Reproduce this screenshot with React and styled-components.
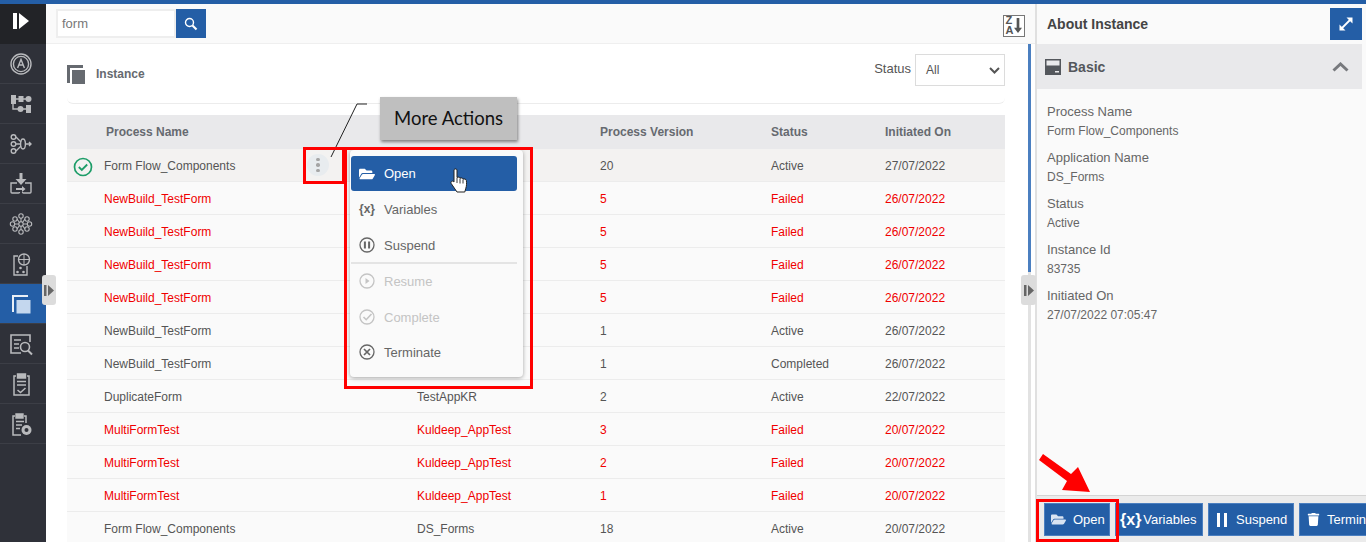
import React from 'react';
import styled, { createGlobalStyle } from 'styled-components';
import { FaFolderOpen, FaTrash } from 'react-icons/fa';

const GlobalStyle = createGlobalStyle`
  html, body { margin: 0; padding: 0; height: 100%; overflow: hidden; background: #fff; }
  * { box-sizing: border-box; }
  body { font-family: "Liberation Sans", Arial, sans-serif; }
`;

// app names of the first rows sit under the open menu, so they stay empty
const rows = [
  { name: 'Form Flow_Components', ver: 20, status: 'Active', date: '27/07/2022', selected: true },
  { name: 'NewBuild_TestForm', ver: 5, status: 'Failed', date: '26/07/2022' },
  { name: 'NewBuild_TestForm', ver: 5, status: 'Failed', date: '26/07/2022' },
  { name: 'NewBuild_TestForm', ver: 5, status: 'Failed', date: '26/07/2022' },
  { name: 'NewBuild_TestForm', ver: 5, status: 'Failed', date: '26/07/2022' },
  { name: 'NewBuild_TestForm', ver: 1, status: 'Active', date: '26/07/2022' },
  { name: 'NewBuild_TestForm', ver: 1, status: 'Completed', date: '26/07/2022' },
  { name: 'DuplicateForm', app: 'TestAppKR', ver: 2, status: 'Active', date: '22/07/2022' },
  { name: 'MultiFormTest', app: 'Kuldeep_AppTest', ver: 3, status: 'Failed', date: '20/07/2022' },
  { name: 'MultiFormTest', app: 'Kuldeep_AppTest', ver: 2, status: 'Failed', date: '20/07/2022' },
  { name: 'MultiFormTest', app: 'Kuldeep_AppTest', ver: 1, status: 'Failed', date: '20/07/2022' },
  { name: 'Form Flow_Components', app: 'DS_Forms', ver: 18, status: 'Active', date: '20/07/2022' },
];

const fields = [
  ['Process Name', 'Form Flow_Components'],
  ['Application Name', 'DS_Forms'],
  ['Status', 'Active'],
  ['Instance Id', '83735'],
  ['Initiated On', '27/07/2022 07:05:47'],
];

const Ico = ({ children }) => (
  <svg viewBox="0 0 24 24" fill="none" stroke="currentColor" strokeWidth="1.4">
    {children}
  </svg>
);

const navIcons = [
  <Ico key="a"><circle cx="12" cy="12" r="10" /><circle cx="12" cy="12" r="7.6" /><path d="M8.6 16 12 7.500 15.400 16M9.800 13h4.400" /></Ico>,
  <Ico key="b">
    <g fill="currentColor" stroke="none">
      <rect x="2" y="3" width="5" height="9" /><rect x="9.500" y="4" width="5" height="6" /><circle cx="19.500" cy="7" r="3" />
      <circle cx="11.500" cy="17" r="3" /><rect x="17" y="13" width="5" height="8" />
    </g>
    <path d="M7 7h10M4 12v5h5M14 17h3" />
  </Ico>,
  <Ico key="c"><circle cx="4.500" cy="5" r="2.300" /><circle cx="4.500" cy="12" r="2.300" /><circle cx="4.500" cy="19" r="2.300" /><path d="M7 5l5 5M7 12h5M7 19l5-5" /><ellipse cx="14" cy="12" rx="2.400" ry="5" /><path d="M17 12h5M20 10l2 2-2 2" /></Ico>,
  <Ico key="d">
    <path d="M12 1v8" strokeWidth="3" /><path d="M6.500 7h11L12 13z" fill="currentColor" stroke="none" />
    <path d="M8 11H2v9q0 1 1 1h6.500q1 0 1-1M16 11h6v9q0 1-1 1h-6.500q-1 0-1-1" />
    <path d="M7 17h8" strokeWidth="2" /><path d="M13 14l3.500 3-3.500 3z" fill="currentColor" stroke="none" />
  </Ico>,
  <Ico key="e">
    <g strokeWidth="1.100">
      <circle cx="12" cy="4" r="2.200" /><circle cx="6" cy="7" r="2.200" /><circle cx="18" cy="7" r="2.200" />
      <circle cx="3.500" cy="12" r="2.200" /><circle cx="12" cy="12" r="2.200" /><circle cx="20.500" cy="12" r="2.200" />
      <circle cx="6" cy="17" r="2.200" /><circle cx="18" cy="17" r="2.200" /><circle cx="12" cy="20" r="2.200" />
      <path d="M12 6v4M12 14v4M8 7l2.500 3.500M16 7l-2.500 3.500M8 17l2.500-3.500M16 17l-2.500-3.500M5.700 12h4.100M14.200 12h4.100" />
    </g>
  </Ico>,
  <Ico key="f">
    <path d="M9 4H5v19h13v-9" /><circle cx="15" cy="7.500" r="5.500" /><path d="M15 2v11M10 7.500h10" strokeWidth="1" />
    <g fill="currentColor" stroke="none"><circle cx="11.500" cy="16" r="1.300" /><circle cx="8.500" cy="20" r="1.300" /><circle cx="14.500" cy="20" r="1.300" /></g>
  </Ico>,
  <Ico key="g">
    <path d="M4 20V4h15" stroke="#fff" strokeWidth="2" opacity=".9" />
    <rect x="7.500" y="8" width="14" height="13.500" fill="#c4d7ee" stroke="none" />
  </Ico>,
  <Ico key="h">
    <path d="M21 10V3H2v18h10" strokeWidth="1.600" /><path d="M5 8h7M5 12h5M5 16h5" strokeWidth="1.600" />
    <circle cx="16" cy="15" r="4.500" strokeWidth="1.600" /><path d="M19 18.500l4 4" strokeWidth="2" />
  </Ico>,
  <Ico key="i">
    <path d="M7 4H5v19h15V4h-2" strokeWidth="1.500" /><path d="M8.500 2h8v4h-8z" fill="currentColor" />
    <path d="M8 9.500h9M8 13h9" strokeWidth="1.300" /><path d="M8.500 18l3 2.500 5-4.500" strokeWidth="1.500" />
  </Ico>,
  <Ico key="j">
    <path d="M6 4H4v19h8M15 4h2v7" strokeWidth="1.500" /><path d="M7 2h7v4H7z" fill="currentColor" />
    <path d="M7 9.500h8M7 13h6M7 16.500h4" strokeWidth="1.300" />
    <circle cx="17.500" cy="18" r="5" fill="currentColor" stroke="none" /><circle cx="17.500" cy="18" r="2" fill="#2f3139" stroke="none" />
  </Ico>,
];

const MenuIcon = ({ kind }) => {
  if (kind === 'open') return <FaFolderOpen size={16} />;
  if (kind === 'vars') return <Curly size="12px">{'{x}'}</Curly>;
  return (
    <svg width="16" height="16" viewBox="0 0 16 16" fill="none" stroke="currentColor" strokeWidth="1.300">
      <circle cx="8" cy="8" r="7" />
      {kind === 'pause' && <path d="M5.900 4.500v7M10.100 4.500v7" strokeWidth="2" />}
      {kind === 'play' && <path d="M6.500 5l4 3-4 3z" fill="currentColor" stroke="none" />}
      {kind === 'check' && <path d="M4.500 8l2.700 2.700L12.500 5" strokeWidth="1.600" />}
      {kind === 'close' && <path d="M5 5l6 6M11 5l-6 6" strokeWidth="1.700" />}
    </svg>
  );
};

const App = () => (
  <Page>
    <GlobalStyle />
    <TopBar />
    <Body>
      <Sidebar>
        <NavLogo>
          <svg width="16" height="16" viewBox="0 0 16 16"><path d="M0 0h4v16H0zM6 0l10 8-10 8z" fill="#fff" /></svg>
        </NavLogo>
        {navIcons.map((icon, i) => (
          <NavItem key={i} active={i === 6}>{icon}</NavItem>
        ))}
      </Sidebar>

      <Main>
        <Toolbar>
          <SearchBox>
            <SearchInput>form</SearchInput>
            <SearchButton>
              <svg width="14" height="14" viewBox="0 0 14 14" fill="none" stroke="#fff"><circle cx="5.500" cy="5.500" r="4" strokeWidth="1.400" /><path d="M8.500 8.500l4 4" strokeWidth="2.200" /></svg>
            </SearchButton>
          </SearchBox>
          <SortButton>
            <SortLetters><span>Z</span><span>A</span></SortLetters>
            <svg width="8" height="17" viewBox="0 0 9 17"><path d="M3 0h3v11h3l-4.500 6L0 11h3z" fill="#555" /></svg>
          </SortButton>
        </Toolbar>
        <Workspace>
          <Content>
            <TitleRow>
              <TitleGroup>
                <svg width="18" height="19" viewBox="0 0 18 19">
                  <path d="M0 0h16v3H3v15H0z" fill="#666a70" />
                  <rect x="5" y="5" width="13" height="14" fill="#666a70" />
                </svg>
                <Title>Instance</Title>
              </TitleGroup>
              <StatusFilter>
                <StatusLabel>Status</StatusLabel>
                <Select>All<svg width="11" height="7" viewBox="0 0 11 7" fill="none" stroke="#555" strokeWidth="2"><path d="M1 1l4.500 4.500L10 1" /></svg></Select>
              </StatusFilter>
            </TitleRow>
            <Table>
              <HeadRow>
                <HeadCell first>Process Name</HeadCell>
                <HeadCell />
                <HeadCell>Process Version</HeadCell>
                <HeadCell>Status</HeadCell>
                <HeadCell>Initiated On</HeadCell>
              </HeadRow>
              {rows.map((r, i) => (
                <Row key={i} selected={r.selected} failed={r.status === 'Failed'}>
                  <NameCell>
                    {r.selected && (
                      <CheckMark>
                        <svg width="20" height="20" viewBox="0 0 20 20" fill="none" stroke="#1d9d68"><circle cx="10" cy="10" r="8.500" strokeWidth="1.700" /><path d="M5.800 10l3 3 5.400-5.500" strokeWidth="1.800" /></svg>
                      </CheckMark>
                    )}
                    {r.name}
                  </NameCell>
                  <span>{r.app}</span>
                  <span>{r.ver}</span>
                  <span>{r.status}</span>
                  <span>{r.date}</span>
                </Row>
              ))}
            </Table>
          </Content>
          <ScrollTrack><ScrollThumb /></ScrollTrack>
        </Workspace>
      </Main>

      <Panel>
        <PanelHeader>
          <PanelTitle>About Instance</PanelTitle>
          <ExpandButton>
            <svg width="16" height="16" viewBox="0 0 16 16" fill="none" stroke="#fff" strokeWidth="1.800"><path d="M3 13 13 3" /><path d="M8.500 1.500h6v6L8.500 1.500zM7.500 14.500h-6v-6l6 6z" fill="#fff" stroke="none" /></svg>
          </ExpandButton>
        </PanelHeader>
        <SectionHead>
          <SectionTitle>
            <svg width="16" height="16" viewBox="0 0 16 16"><path d="M0 0h16v16H0z" fill="#54575c" /><path d="M1.500 1.500h13v5h-13z" fill="#e9e9eb" /><path d="M10 12h4v1.500h-4z" fill="#e9e9eb" /></svg>
            Basic
          </SectionTitle>
          <svg width="17" height="10" viewBox="0 0 17 10" fill="none" stroke="#77797d" strokeWidth="3"><path d="M1.500 8.500l7-6.500 7 6.500" /></svg>
        </SectionHead>
        <Fields>
          {fields.map(([label, value]) => (
            <Field key={label}>
              <FieldLabel>{label}</FieldLabel>
              <FieldValue>{value}</FieldValue>
            </Field>
          ))}
        </Fields>
        <ActionBar>
          <ActionButton width="66px" pad="6px" gap="7px"><FaFolderOpen size={15} color="#d9e4f2" />Open</ActionButton>
          <ActionButton width="88px" pad="4px" gap="2px"><Curly size="16px">{'{x}'}</Curly>Variables</ActionButton>
          <ActionButton width="86px" pad="8px" gap="9px">
            <svg width="10" height="14" viewBox="0 0 10 14"><path d="M0 0h3v14H0zM7 0h3v14H7z" fill="#fff" /></svg>
            Suspend
          </ActionButton>
          <ActionButton width="90px" pad="7px" gap="7px"><FaTrash size={13} />Terminate</ActionButton>
        </ActionBar>
      </Panel>

      <Handle left="42px" width="14px" />
      <Handle left="1021px" width="15px" />

      {/* annotations laid over the screenshot */}
      <Callout>More Actions</Callout>
      <Leader width="60" height="60" viewBox="0 0 60 60" fill="none" stroke="#222"><path d="M3 54 29 1h10" /></Leader>
      <KebabWrap>
        <Kebab><i /><i /><i /></Kebab>
      </KebabWrap>
      <RedBox x="303px" y="143px" w="42px" h="37px" />
      <Menu>
        <MenuItem active><MenuIcon kind="open" />Open</MenuItem>
        <MenuItem><MenuIcon kind="vars" />Variables</MenuItem>
        <MenuItem><MenuIcon kind="pause" />Suspend</MenuItem>
        <MenuDivider />
        <MenuItem disabled><MenuIcon kind="play" />Resume</MenuItem>
        <MenuItem disabled><MenuIcon kind="check" />Complete</MenuItem>
        <MenuItem><MenuIcon kind="close" />Terminate</MenuItem>
      </Menu>
      <RedBox x="344px" y="143px" w="189px" h="242px" />
      <HandCursor width="18" height="25" viewBox="0 0 18 25">
        <path d="M4 1.800C4.600.6 6.800.6 7 2v7.500c1.300-.8 2.900-.4 3 .7 1.200-.7 2.800-.2 3 .9 1.300-.5 3.200.1 3.400 1.500.3 2.800.2 5.500-.6 7.700L14.800 24H7L1.200 15.500c-.9-1.600 1-3.200 2.300-1.900L4 14z" fill="#fff" stroke="#222" strokeWidth="1" />
        <path d="M7 10v5M10 10.500v5M13 11.500v4" stroke="#222" strokeWidth=".9" />
      </HandCursor>
      <Arrow width="52" height="39" viewBox="0 0 52 39"><path d="M4 0 32 20 39 13 51 38 23 36 28 27 0 6z" fill="#f00" /></Arrow>
      <RedBox x="1036px" y="495px" w="83px" h="43px" />
    </Body>
  </Page>
);

const Page = styled.div`
  width: 1366px;
  height: 542px;
  overflow: hidden;
  display: flex;
  flex-direction: column;
`;

const TopBar = styled.div`
  height: 4px;
  background: #245ea6;
  flex: none;
`;

const Body = styled.div`
  position: relative;
  flex: 1;
  min-height: 0;
  display: flex;
`;

const Sidebar = styled.nav`
  width: 46px;
  flex: none;
  background: #2f3139;
  display: flex;
  flex-direction: column;
`;

const NavLogo = styled.div`
  height: 40px;
  flex: none;
  background: #222327;
  display: flex;
  align-items: center;
  justify-content: center;
  padding-right: 5px;
  padding-bottom: 6px;
`;

const NavItem = styled.div.withConfig({ shouldForwardProp: p => p !== 'active' })`
  height: 40px;
  flex: none;
  display: flex;
  align-items: center;
  justify-content: center;
  color: #b9babd;
  border-bottom: 1px solid #3c3e46;
  background: ${p => (p.active ? '#245ea6' : 'transparent')};
  padding-right: 4px;
  svg { width: 24px; height: 24px; }
`;

const Main = styled.main`
  flex: none;
  width: 989px;
  display: flex;
  flex-direction: column;
  background: #fff;
`;

const Toolbar = styled.div`
  height: 40px;
  flex: none;
  display: flex;
  align-items: center;
  justify-content: space-between;
  background: #fafafa;
  border-bottom: 1px solid #efefef;
  padding: 0 10px 0 10px;
`;

const SearchBox = styled.div`
  display: flex;
  height: 29px;
`;

const SearchInput = styled.div`
  width: 120px;
  border: 2px solid #eeeeee;
  background: #fff;
  font-size: 13px;
  color: #777;
  padding: 0 4px;
  line-height: 25px;
`;

const SearchButton = styled.div`
  width: 30px;
  background: #245ea6;
  display: flex;
  align-items: center;
  justify-content: center;
`;

const SortButton = styled.div`
  width: 22px;
  height: 22px;
  margin-top: 4px;
  border: 1px solid #777;
  display: flex;
  align-items: center;
  justify-content: center;
  gap: 1px;
  background: #fff;
`;

const SortLetters = styled.div`
  display: flex;
  flex-direction: column;
  font-size: 11px;
  font-weight: 700;
  line-height: 9.500px;
  color: #555;
`;

const Workspace = styled.div`
  flex: 1;
  min-height: 0;
  display: flex;
`;

const Content = styled.div`
  flex: 1;
  min-width: 0;
  padding: 0 23px 0 21px;
  display: flex;
  flex-direction: column;
`;

const ScrollTrack = styled.div`
  width: 3px;
  flex: none;
  margin-right: 4px;
  background: #e2e2e2;
`;

const ScrollThumb = styled.div`
  height: 228px;
  background: #4b7fc0;
`;

const TitleRow = styled.div`
  height: 60px;
  flex: none;
  display: flex;
  align-items: flex-start;
  justify-content: space-between;
  border-bottom: 1px solid #ececec;
  border-radius: 0 0 6px 6px;
`;

const TitleGroup = styled.div`
  display: flex;
  align-items: center;
  gap: 11px;
  padding-top: 21px;
`;

const Title = styled.span`
  font-size: 12px;
  font-weight: 700;
  color: #666a70;
  margin-bottom: 2px;
`;

const StatusFilter = styled.div`
  display: flex;
  align-items: center;
  gap: 4px;
  padding-top: 10px;
  font-size: 13px;
  color: #555;
`;

const StatusLabel = styled.span`
  margin-bottom: 3px;
`;

const Select = styled.div`
  width: 90px;
  height: 32px;
  border: 1px solid #dcdcdc;
  padding: 0 4px 0 10px;
  display: flex;
  align-items: center;
  justify-content: space-between;
  font-size: 12px;
  color: #555;
`;

const Table = styled.div`
  margin-top: 11px;
  display: flex;
  flex-direction: column;
`;

const gridColumns = '350px 183px 171px 114px 1fr';

const HeadRow = styled.div`
  height: 34px;
  flex: none;
  display: grid;
  grid-template-columns: ${gridColumns};
  align-items: center;
  background: #e9e9eb;
`;

const HeadCell = styled.span.withConfig({ shouldForwardProp: p => p !== 'first' })`
  font-size: 12px;
  font-weight: 700;
  color: #666a70;
  padding-left: ${p => (p.first ? '39px' : '0')};
`;

const Row = styled.div.withConfig({ shouldForwardProp: p => p !== 'selected' && p !== 'failed' })`
  height: 33px;
  flex: none;
  display: grid;
  grid-template-columns: ${gridColumns};
  align-items: center;
  padding-top: 1px;
  font-size: 12px;
  color: ${p => (p.failed ? '#f00000' : '#555')};
  background: ${p => (p.selected ? '#f3f2f1' : '#fafafa')};
  border-bottom: 1px solid #ececec;
`;

const NameCell = styled.span`
  position: relative;
  padding-left: 37px;
`;

const CheckMark = styled.span`
  position: absolute;
  left: 6px;
  top: -2px;
`;

const Panel = styled.aside`
  position: relative;
  flex: 1;
  min-width: 0;
  display: flex;
  flex-direction: column;
  background: #fafafa;
  border-left: 2px solid #e0e0e0;
`;

const PanelHeader = styled.div`
  height: 40px;
  flex: none;
  display: flex;
  align-items: center;
  justify-content: space-between;
  padding: 0 4px 0 10px;
`;

const PanelTitle = styled.span`
  font-size: 14px;
  font-weight: 700;
  color: #444;
`;

const ExpandButton = styled.div`
  width: 32px;
  height: 32px;
  background: #245ea6;
  display: flex;
  align-items: center;
  justify-content: center;
`;

const SectionHead = styled.div`
  height: 45px;
  flex: none;
  margin-right: 4px;
  background: #e9e9eb;
  display: flex;
  align-items: center;
  justify-content: space-between;
  padding: 0 13px 0 8px;
`;

const SectionTitle = styled.div`
  display: flex;
  align-items: center;
  gap: 7px;
  font-size: 14px;
  font-weight: 700;
  color: #54575c;
`;

const Fields = styled.div`
  flex: 1;
  min-height: 0;
  padding: 15px 10px 0;
  display: flex;
  flex-direction: column;
  gap: 12px;
`;

const Field = styled.div`
  height: 34px;
  display: flex;
  flex-direction: column;
  gap: 4px;
`;

const FieldLabel = styled.span`
  font-size: 13px;
  line-height: 16px;
  color: #666;
`;

const FieldValue = styled.span`
  font-size: 12px;
  line-height: 14px;
  color: #666;
`;

const ActionBar = styled.div`
  height: 47px;
  flex: none;
  border-top: 1px solid #d4d4d4;
  background: #ebebeb;
  display: flex;
  align-items: flex-start;
  gap: 5px;
  padding: 7px 0 0 7px;
  overflow: hidden;
`;

const ActionButton = styled.div.withConfig({ shouldForwardProp: p => !['pad', 'gap', 'width'].includes(p) })`
  width: ${p => p.width};
  height: 33px;
  flex: none;
  background: #245ea6;
  border: 1px solid #4b7fc0;
  color: #fff;
  font-size: 13px;
  display: flex;
  align-items: center;
  padding-left: ${p => p.pad};
  gap: ${p => p.gap};
  white-space: nowrap;
`;

const Curly = styled.span.withConfig({ shouldForwardProp: p => p !== 'size' })`
  font-weight: 700;
  font-size: ${p => p.size};
`;

const Handle = styled.div.attrs({ children: <svg width="10" height="11" viewBox="0 0 10 11"><path d="M0 0h2.500v11H0zM4 0l6 5.500L4 11z" fill="#666" /></svg> })`
  position: absolute;
  top: 271px;
  left: ${p => p.left};
  width: ${p => p.width};
  height: 30px;
  background: #dcdcdc;
  border-radius: 3px;
  display: flex;
  align-items: center;
  justify-content: center;
`;

const Callout = styled.div`
  position: absolute;
  left: 380px;
  top: 93px;
  width: 137px;
  height: 43px;
  padding-bottom: 2px;
  background: #bfbfbf;
  box-shadow: 1px 2px 3px rgba(0, 0, 0, .45);
  display: flex;
  align-items: center;
  justify-content: center;
  font-family: Lato, sans-serif;
  font-size: 18.500px;
  color: #111;
`;

const Leader = styled.svg`
  position: absolute;
  left: 328px;
  top: 99px;
`;

const RedBox = styled.div.withConfig({ shouldForwardProp: () => false })`
  position: absolute;
  left: ${p => p.x};
  top: ${p => p.y};
  width: ${p => p.w};
  height: ${p => p.h};
  border: 3px solid #f00;
  pointer-events: none;
`;

const KebabWrap = styled.div`
  position: absolute;
  left: 307px;
  top: 150px;
`;

const Kebab = styled.div`
  width: 22px;
  height: 22px;
  border-radius: 50%;
  background: #e8ecef;
  display: flex;
  flex-direction: column;
  align-items: center;
  justify-content: center;
  gap: 2px;
  i { width: 3.500px; height: 3.500px; border-radius: 50%; background: #a5a5a5; }
`;

const Menu = styled.div`
  position: absolute;
  left: 350px;
  top: 146px;
  width: 173px;
  height: 227px;
  background: #fafafa;
  border-radius: 4px;
  box-shadow: 0 1px 4px rgba(0, 0, 0, .35);
  padding: 6px 6px 0 1px;
`;

const MenuItem = styled.div.withConfig({ shouldForwardProp: p => p !== 'active' && p !== 'disabled' })`
  height: ${p => (p.active ? '35px' : '36px')};
  display: grid;
  grid-template-columns: 25px 1fr;
  align-items: center;
  justify-items: start;
  padding-left: 8px;
  font-size: 13px;
  border-radius: 3px;
  background: ${p => (p.active ? '#245ea6' : 'transparent')};
  color: ${p => (p.active ? '#fff' : p.disabled ? '#c4c4c4' : '#666')};
  &:last-child { margin-top: -1px; }
`;

const MenuDivider = styled.div`
  height: 2px;
  background: #e4e4e4;
  margin: -1px 0;
`;

const HandCursor = styled.svg`
  position: absolute;
  left: 450px;
  top: 164px;
`;

const Arrow = styled.svg`
  position: absolute;
  left: 1039px;
  top: 450px;
`;

export default App;
